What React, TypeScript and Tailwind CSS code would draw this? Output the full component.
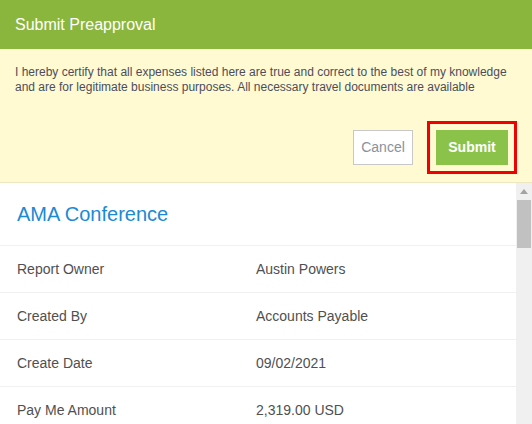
const rows = [
  { label: "Report Owner", value: "Austin Powers" },
  { label: "Created By", value: "Accounts Payable" },
  { label: "Create Date", value: "09/02/2021" },
  { label: "Pay Me Amount", value: "2,319.00 USD" },
];

export default function App() {
  return (
    <div className="w-[532px] h-[424px] overflow-hidden bg-white font-['Liberation_Sans',Arial,sans-serif] flex flex-col">
      <div className="h-[49px] shrink-0 bg-[#8ab63e] flex items-center px-[15px]">
        <h1 className="text-[16px] text-white">Submit Preapproval</h1>
      </div>

      <div className="shrink-0 bg-[#fffad2] border-b border-[#ece7c0] pt-[16px] pb-[8px]">
        <p className="px-[15px] text-[12px] leading-[15px] text-[#4d4d5c]">
          I hereby certify that all expenses listed here are true and correct to the best of my knowledge
          and are for legitimate business purposes. All necessary travel documents are available
        </p>
        <div className="mt-[26px] flex justify-end items-center pr-[15px]">
          <button className="w-[60px] h-[35px] bg-white border border-[#c8c8c8] text-[14px] text-[#8a919c]">
            Cancel
          </button>
          <div className="ml-[14px] border-[3px] border-[#f00000] p-[6px]">
            <button className="w-[72px] h-[35px] bg-[#8bc34a] text-[14px] font-bold text-white">
              Submit
            </button>
          </div>
        </div>
      </div>

      <div className="flex flex-1 min-h-0">
        <div className="flex-1">
          <div className="h-[63px] flex items-center px-[17px] border-b border-[#f0f0f0]">
            <h2 className="text-[20px] text-[#1a8ad4]">AMA Conference</h2>
          </div>
          {rows.map((r) => (
            <div key={r.label} className="h-[47px] flex items-center px-[17px] border-b border-[#f0f0f0] text-[14px] text-[#505050]">
              <span className="w-[239px]">{r.label}</span>
              <span>{r.value}</span>
            </div>
          ))}
        </div>
        <div className="w-[16px] bg-[#f0f0f0] flex flex-col items-center pt-[6px]">
          <svg width="8" height="5" viewBox="0 0 8 5">
            <path d="M0 5 L4 0 L8 5 Z" fill="#a3a3a3" />
          </svg>
          <div className="mt-[6px] w-[14px] h-[48px] bg-[#c1c1c1]" />
        </div>
      </div>
    </div>
  );
}
